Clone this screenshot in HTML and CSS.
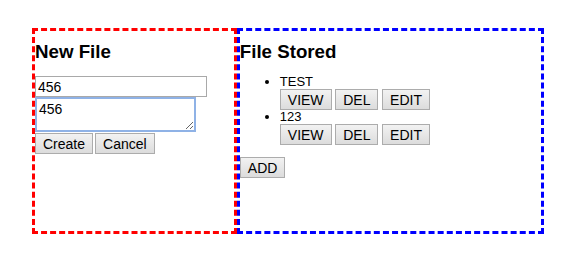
FILE: index.html
```html
<!DOCTYPE html>
<html lang="en">
<head>
    <meta charset="UTF-8">
    <title>Files</title>
    <link rel="stylesheet" href="styles.css">
</head>
<body>
    <div class="wrap">
        <div class="panel new-file">
            <h3>New File</h3>
            <input class="name-input" type="text" value="456">
            <textarea class="body-input">456</textarea>
            <div class="actions">
                <button>Create</button>
                <button>Cancel</button>
            </div>
        </div>
        <div class="panel stored">
            <h3>File Stored</h3>
            <ul class="file-list">
                <li>
                    <div class="file-name">TEST</div>
                    <button>VIEW</button> <button>DEL</button> <button>EDIT</button>
                </li>
                <li>
                    <div class="file-name">123</div>
                    <button>VIEW</button> <button>DEL</button> <button>EDIT</button>
                </li>
            </ul>
            <button>ADD</button>
        </div>
    </div>
</body>
</html>
```

FILE: styles.css
```css
* { box-sizing: border-box; }
body { margin: 8px; font-family: 'Liberation Sans', Arial, sans-serif; color: #000; background: #fff; }
.wrap { display: flex; width: 512px; margin: 20px 0 0 24px; }
.panel { height: 206px; border: 3px dashed; }
.new-file { width: 40%; border-color: #f00; }
.stored { width: 60%; border-color: #00f; }
h3 { margin: 10px 0 13px; font-size: 18.72px; font-weight: bold; }
.name-input { display: block; width: 172px; height: 21px; margin: 0; padding: 1px 2px; border: 1px solid #a9a9a9; font: 14px 'Liberation Sans', Arial, sans-serif; outline: none; }
.body-input { display: block; width: 161px; height: 35px; margin: 0; padding: 2px 2px; border: 2px solid #8fb2e6; font: 14px 'Liberation Sans', Arial, sans-serif; resize: vertical; outline: none; }
.actions { display: flex; gap: 2px; margin-top: 1px; }
button { height: 21px; margin: 0; padding: 1px 7px; border: 1px solid #acacac; border-radius: 0; background: linear-gradient(#f2f2f2, #dcdcdc); font: 14px 'Liberation Sans', Arial, sans-serif; color: #000; vertical-align: top; }
.file-list { margin: -1px 0 12px; padding-left: 40px; font-size: 13px; }
.file-list li { margin: 0; line-height: 14px; }
.file-name { line-height: 14px; }
```
